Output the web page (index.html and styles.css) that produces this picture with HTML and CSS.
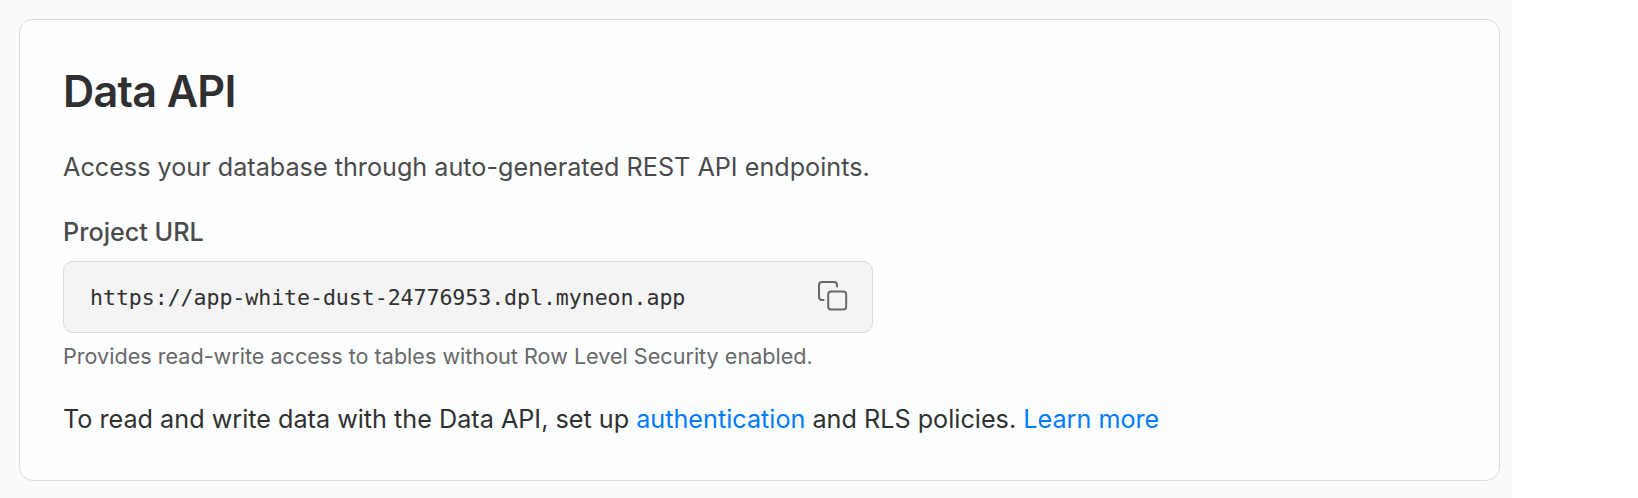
FILE: index.html
```html
<!DOCTYPE html>
<html lang="en">
<head>
<meta charset="utf-8">
<title>Data API</title>
<link rel="stylesheet" href="styles.css">
</head>
<body>
<main class="page">
  <section class="card">
    <h1 class="title">Data API</h1>
    <p class="lead">Access your database through auto-generated REST API endpoints.</p>
    <h2 class="label">Project URL</h2>
    <div class="url-box">
      <code class="url">https://app-white-dust-24776953.dpl.myneon.app</code>
      <button class="copy" aria-label="Copy">
        <svg class="copy-icon" viewBox="0 0 32 32" fill="none" stroke="currentColor" stroke-width="2" stroke-linecap="round">
          <rect x="12.2" y="10.4" width="18" height="18" rx="3"/>
          <path d="M7.6 19H6a3 3 0 0 1-3-3V4a3 3 0 0 1 3-3h12a3 3 0 0 1 3 3v1.6"/>
        </svg>
      </button>
    </div>
    <p class="hint">Provides read-write access to tables without Row Level Security enabled.</p>
    <p class="note">To read and write data with the Data API, set up <a class="link" href="#">authentication</a> and RLS policies. <a class="link" href="#">Learn more</a></p>
  </section>
</main>
</body>
</html>
```

FILE: styles.css
```css
* { box-sizing: border-box; }
body { margin: 0; background: #fff; font-family: Inter, sans-serif; }
.page { width: 1512px; height: 498px; padding: 19px 12px 17px 19px; background: #fafafa; }
.card { height: 462px; padding: 43px 43px 0; border: 1px solid #dcdcde; border-radius: 14px; background: #fdfeff; }
.title { margin: 0; font-size: 43.2px; line-height: 56px; font-weight: 600; letter-spacing: -0.7px; color: #303030; }
.lead { margin: 32px 0 0; font-size: 25.2px; line-height: 32px; color: #4b4b4b; }
.label { margin: 32px 0 0; font-size: 25.2px; line-height: 34px; font-weight: 500; color: #4b4b4b; }
.url-box { display: flex; align-items: center; justify-content: space-between; width: 810px; height: 72px; margin-top: 12px; padding: 0 24px 0 26px; border: 1px solid #dcdcde; border-radius: 10px; background: #f4f4f4; }
.url { font-family: "DejaVu Sans Mono", monospace; font-size: 21.6px; letter-spacing: -0.06px; color: #303030; }
.copy { display: flex; padding: 0; border: 0; background: none; color: #686868; }
.copy-icon { width: 32px; height: 32px; }
.hint { margin: 9px 0 0; font-size: 21.6px; line-height: 28px; color: #686868; }
.note { margin: 31px 0 0; font-size: 25.2px; line-height: 36px; color: #303030; }
.link { color: #007bff; text-decoration: none; }
```
